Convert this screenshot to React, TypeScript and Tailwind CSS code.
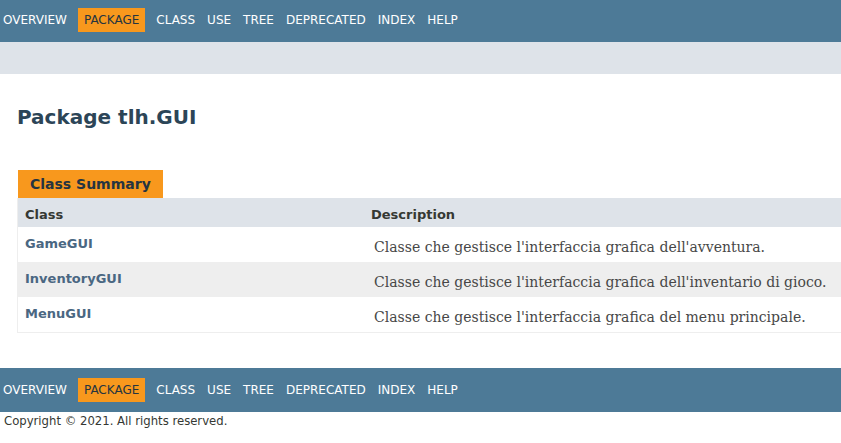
import React from "react";

const items = ["Overview", "Package", "Class", "Use", "Tree", "Deprecated", "Index", "Help"];

function NavList() {
  return (
    <ul className="ml-[-3px] flex items-start">
      {items.map((it) =>
        it === "Package" ? (
          <li key={it} className="mx-[5px] h-[24px] bg-[#F8981D] px-[6px] pt-[4px] leading-[16px] uppercase text-[#253441]">
            {it}
          </li>
        ) : (
          <li key={it} className="h-[24px] px-[6px] pt-[4px] leading-[16px] uppercase">
            {it}
          </li>
        )
      )}
    </ul>
  );
}

const rows = [
  ["GameGUI", "Classe che gestisce l'interfaccia grafica dell'avventura."],
  ["InventoryGUI", "Classe che gestisce l'interfaccia grafica dell'inventario di gioco."],
  ["MenuGUI", "Classe che gestisce l'interfaccia grafica del menu principale."],
];

export default function App() {
  return (
    <div className="w-[841px] overflow-hidden bg-white font-['DejaVu_Sans',sans-serif] text-[#353833]">
      <div className="h-[42px] w-full bg-[#4D7A97] pt-[8px] text-[12px] text-white">
        <NavList />
      </div>
      <div className="h-[32px] w-full bg-[#dee3e9]" />
      <div className="pl-[17px]">
        <h1 className="pt-[30px] text-[20px] font-bold leading-[26px] text-[#2c4557]">Package tlh.GUI</h1>
      </div>
      <div className="mt-[40px] pl-[17px]">
        <div className="pl-[1px]">
          <div className="inline-block h-[28px] bg-[#F8981D] px-[12px] pt-[5px] text-[14px] font-bold leading-[18px] text-[#253441]">
            Class Summary
          </div>
        </div>
        <div className="w-[900px] border-b border-l border-[#eeeeee]">
          <div className="flex h-[29px] bg-[#dee3e9] text-[13px] font-bold leading-[16px] text-[#353833]">
            <div className="w-[347px] pl-[7px] pt-[9px]">Class</div>
            <div className="pl-[6px] pt-[9px]">Description</div>
          </div>
          {rows.map(([name, desc], i) => (
            <div key={name} className={`flex h-[35px] ${i === 1 ? "bg-[#eeeeee]" : "bg-white"}`}>
              <div className="w-[347px] pl-[7px] pt-[9px] text-[13px] font-bold leading-[16px] text-[#4A6782]">{name}</div>
              <div className="pl-[9px] pt-[11px] font-['DejaVu_Serif',serif] text-[14px] leading-[18px] text-[#474747]">
                {desc}
              </div>
            </div>
          ))}
        </div>
      </div>
      <div className="mt-[35px]">
        <div className="h-[44px] w-full bg-[#4D7A97] pt-[10px] text-[12px] text-white">
          <NavList />
        </div>
        <p className="pl-[4px] pt-[1px] text-[11.67px] leading-[16px] text-[#353833]">Copyright © 2021. All rights reserved.</p>
      </div>
      <div className="h-[20px]" />
    </div>
  );
}
